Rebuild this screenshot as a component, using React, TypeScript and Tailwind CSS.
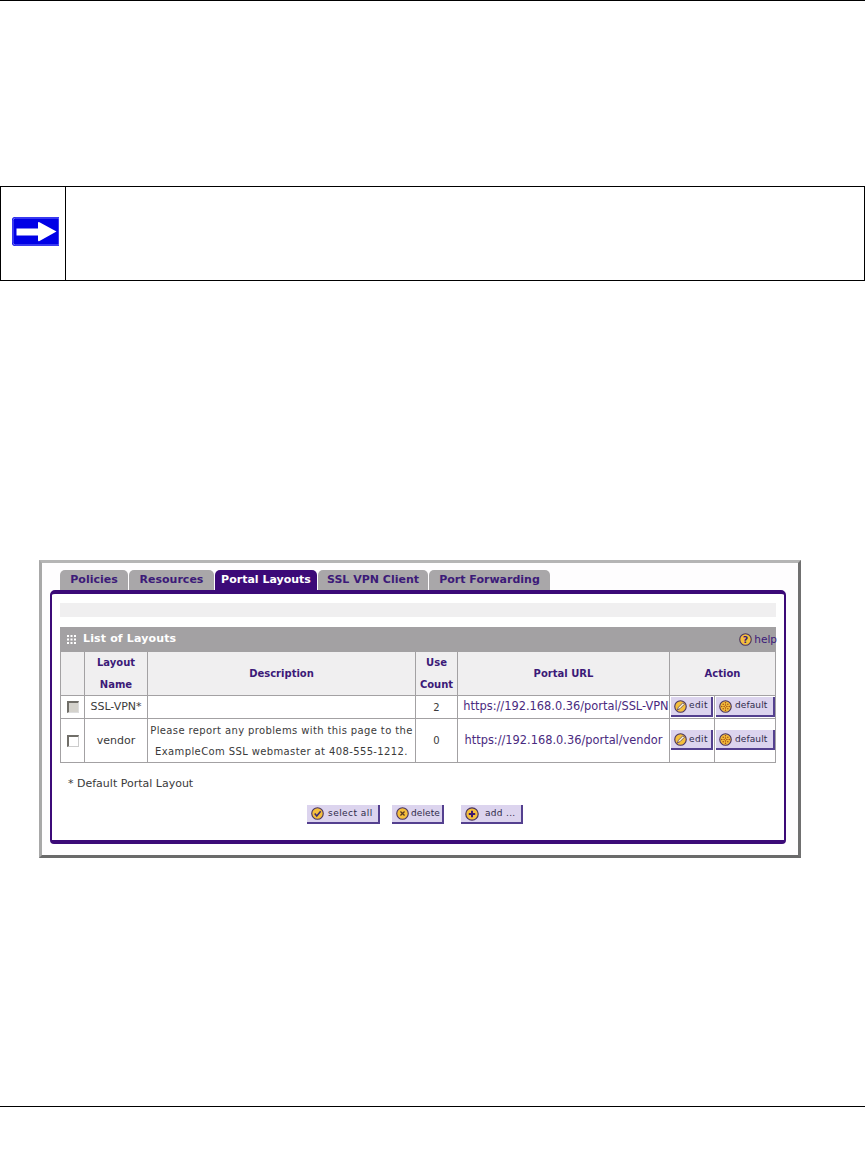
import { ReactNode } from "react";

const tabs = [
  { label: "Policies", width: "w-[68px]" },
  { label: "Resources", width: "w-[85px]" },
  { label: "Portal Layouts", width: "w-[102px]", active: true },
  { label: "SSL VPN Client", width: "w-[110px]" },
  { label: "Port Forwarding", width: "w-[121px]" },
];

const Badge = ({ children, size = 13 }: { children: ReactNode; size?: number }) => (
  <svg width={size} height={size} viewBox="0 0 14 14" className="shrink-0">
    <circle cx="7" cy="7" r="6.2" fill="#f5bf3c" stroke="#4a3560" strokeWidth="1.2" />
    {children}
  </svg>
);

const EditIcon = () => (
  <Badge>
    <path d="M3.6 10.8 L4.8 7.8 L9.6 3 L11.2 4.6 L6.4 9.4 Z" fill="#fff6d0" stroke="#4a3560" strokeWidth="0.8" />
  </Badge>
);

const DefaultIcon = () => (
  <Badge>
    <path
      d="M7 3 h0.01 M4.5 4.5 h0.01 M9.5 4.5 h0.01 M7 5.5 h0.01 M3 7 h0.01 M5.5 7 h0.01 M8.5 7 h0.01 M11 7 h0.01 M7 8.5 h0.01 M4.5 9.5 h0.01 M9.5 9.5 h0.01 M7 11 h0.01"
      stroke="#a04a10"
      strokeWidth="1.6"
      strokeLinecap="round"
    />
  </Badge>
);

const CheckIcon = () => (
  <Badge>
    <path d="M4 7 L6.2 9.6 L10.4 4.6" fill="none" stroke="#3d2a70" strokeWidth="1.7" />
  </Badge>
);

const CrossIcon = () => (
  <Badge>
    <path d="M4.8 4.8 L9.2 9.2 M9.2 4.8 L4.8 9.2" stroke="#5a3a20" strokeWidth="1.4" />
  </Badge>
);

const PlusIcon = () => (
  <Badge size={14}>
    <path d="M7 3.8 V10.2 M3.8 7 H10.2" stroke="#3d1a70" strokeWidth="2" />
  </Badge>
);

const Button = ({
  icon,
  label,
  className,
}: {
  icon: ReactNode;
  label: string;
  className: string;
}) => (
  <div
    className={`flex items-center bg-[#dcd4ee] border-r-2 border-b-2 border-[#54408f] text-[#2f2a4a] text-[9px] ${className}`}
  >
    {icon}
    <span>{label}</span>
  </div>
);

const RowActions = ({ top }: { top: string }) => (
  <>
    <td className={`border border-[#a3a1a3] align-top pl-px ${top}`}>
      <Button icon={<EditIcon />} label="edit" className="w-[42px] h-[20px] gap-[2px] pl-[3px] tracking-[0.4px]" />
    </td>
    <td className={`border border-[#a3a1a3] align-top pl-px ${top}`}>
      <Button icon={<DefaultIcon />} label="default" className="w-[59px] h-[20px] gap-[3px] pl-[3px] tracking-[0.1px]" />
    </td>
  </>
);

export default function App() {
  return (
    <div className="min-h-[1170px] bg-white font-['DejaVu_Sans',sans-serif] text-[#3a3a3a]">
      <div className="h-[1px] bg-black" />

      {/* Note box */}
      <div className="mt-[185px] h-[95px] border border-black flex">
        <div className="w-[65px] border-r border-black flex items-center pl-[11px] pb-[4px]">
          <svg width="47" height="29" viewBox="0 0 47 29">
            <path d="M3 0 H47 V29 H3 Q0 29 0 26 V3 Q0 0 3 0 Z" fill="#0000e6" />
            <path d="M3.5 1 H47 V28 H3.5 Q1 28 1 25.5 V3.5 Q1 1 3.5 1 Z" fill="none" stroke="#8f8fff" strokeWidth="0.8" />
            <path d="M4.5 11.5 H26 V6 Q26 4.5 27.5 5.2 L44.5 14.5 L27.5 24 Q26 24.7 26 23 V18.5 H4.5 Z" fill="#fff" />
          </svg>
        </div>
      </div>

      {/* Screenshot frame */}
      <div className="mt-[279px] ml-[39px] w-[762px] h-[298px] border-[3px] border-t-[#b5b5b5] border-l-[#a8a8a8] border-r-[#707070] border-b-[#6a6a6a] bg-[#fefdfe] pt-[7px] pl-[8px]">
        <div className="flex gap-[1px] pl-[10px] h-[20px]">
          {tabs.map((t) => (
            <div
              key={t.label}
              className={`${t.width} rounded-t-[5px] flex items-center justify-center pt-[1px] text-[11px] font-bold ${
                t.active ? "bg-[#3c0a78] text-white" : "bg-[#a9a7a9] text-[#3c1a78]"
              }`}
            >
              {t.label}
            </div>
          ))}
        </div>

        <div className="w-[736px] h-[254px] border-t-[4px] border-b-[4px] border-x-2 border-[#3c0a78] rounded-t-[5px] rounded-b-[4px] pt-[9px] px-[8px] bg-white">
          <div className="h-[14px] w-[716px] bg-[#f0eff0]" />

          <div className="mt-[10px] h-[24px] w-[716px] bg-[#a3a1a3] flex items-center pl-[7px] text-white relative">
            <div className="flex items-center gap-[7px] text-[11px] font-bold tracking-[0.15px] pt-[1px]">
              <svg width="9" height="9" viewBox="0 0 9 9" fill="#fff">
                <rect x="0" y="0" width="2" height="2" />
                <rect x="3.5" y="0" width="2" height="2" />
                <rect x="7" y="0" width="2" height="2" />
                <rect x="0" y="3.5" width="2" height="2" />
                <rect x="3.5" y="3.5" width="2" height="2" />
                <rect x="7" y="3.5" width="2" height="2" />
                <rect x="0" y="7" width="2" height="2" />
                <rect x="3.5" y="7" width="2" height="2" />
                <rect x="7" y="7" width="2" height="2" />
              </svg>
              List of Layouts
            </div>
            {/* help link hangs a pixel past the bar */}
            <div className="flex items-center gap-[2px] text-[10.5px] text-[#3c1a78] absolute right-[-1px] top-[5px]">
              <Badge>
                <text x="7" y="10.5" textAnchor="middle" fontSize="10" fontWeight="bold" fill="#3c1a78">?</text>
              </Badge>
              help
            </div>
          </div>

          <table className="w-[715px] table-fixed border-collapse text-[11px] text-center">
            <colgroup>
              <col className="w-[24px]" />
              <col className="w-[63px]" />
              <col className="w-[268px]" />
              <col className="w-[42px]" />
              <col className="w-[212px]" />
              <col className="w-[45px]" />
              <col className="w-[61px]" />
            </colgroup>
            <tbody>
              <tr className="h-[43px] bg-[#f0eff0] text-[#3c1a78] font-bold text-[10px] leading-[21.5px]">
                <td className="border border-[#a3a1a3]" />
                <td className="border border-[#a3a1a3]">
                  Layout
                  <br />
                  Name
                </td>
                <td className="border border-[#a3a1a3]">Description</td>
                <td className="border border-[#a3a1a3]">
                  Use
                  <br />
                  Count
                </td>
                <td className="border border-[#a3a1a3]">Portal URL</td>
                <td colSpan={2} className="border border-[#a3a1a3]">Action</td>
              </tr>
              <tr className="h-[23px]">
                <td className="border border-[#a3a1a3]">
                  <div className="mx-auto w-[12px] h-[12px] bg-[#d4d2cc] border-t-2 border-l-2 border-t-[#706e68] border-l-[#706e68] border-r border-b border-r-[#ddd] border-b-[#ddd]" />
                </td>
                <td className="border border-[#a3a1a3]">SSL-VPN*</td>
                <td className="border border-[#a3a1a3]" />
                <td className="border border-[#a3a1a3] text-[10px]">2</td>
                <td className="border border-[#a3a1a3] text-[#4a2a80] text-[11.4px] whitespace-nowrap pl-[5px]">
                  https://192.168.0.36/portal/SSL-VPN
                </td>
                <RowActions top="pt-px" />
              </tr>
              <tr className="h-[44px] leading-[21px]">
                <td className="border border-[#a3a1a3]">
                  <div className="mx-auto w-[12px] h-[12px] bg-white border-t-2 border-l-2 border-t-[#706e68] border-l-[#706e68] border-r border-b border-r-[#ccc] border-b-[#ccc]" />
                </td>
                <td className="border border-[#a3a1a3]">vendor</td>
                <td className="border border-[#a3a1a3] text-[10px] tracking-[0.38px] whitespace-nowrap">
                  Please report any problems with this page to the
                  <br />
                  ExampleCom SSL webmaster at 408-555-1212.
                </td>
                <td className="border border-[#a3a1a3] text-[10px]">0</td>
                <td className="border border-[#a3a1a3] text-[#4a2a80] text-[11.4px] whitespace-nowrap">
                  https://192.168.0.36/portal/vendor
                </td>
                <RowActions top="pt-[11px]" />
              </tr>
            </tbody>
          </table>

          <div className="mt-[14px] ml-[8px] text-[11px] leading-[14px]">* Default Portal Layout</div>

          <div className="mt-[14px] flex">
            <Button icon={<CheckIcon />} label="select all" className="ml-[247px] w-[73px] h-[19px] gap-[4px] pl-[4px] tracking-[0.45px]" />
            <Button icon={<CrossIcon />} label="delete" className="ml-[12px] w-[52px] h-[19px] gap-[2px] pl-[4px] tracking-[0.1px]" />
            <Button icon={<PlusIcon />} label="add ..." className="ml-[17px] w-[62px] h-[19px] gap-[6px] pl-[4px] tracking-[0.3px]" />
          </div>
        </div>
      </div>

      <div className="mt-[248px] h-[1px] bg-black" />
    </div>
  );
}
